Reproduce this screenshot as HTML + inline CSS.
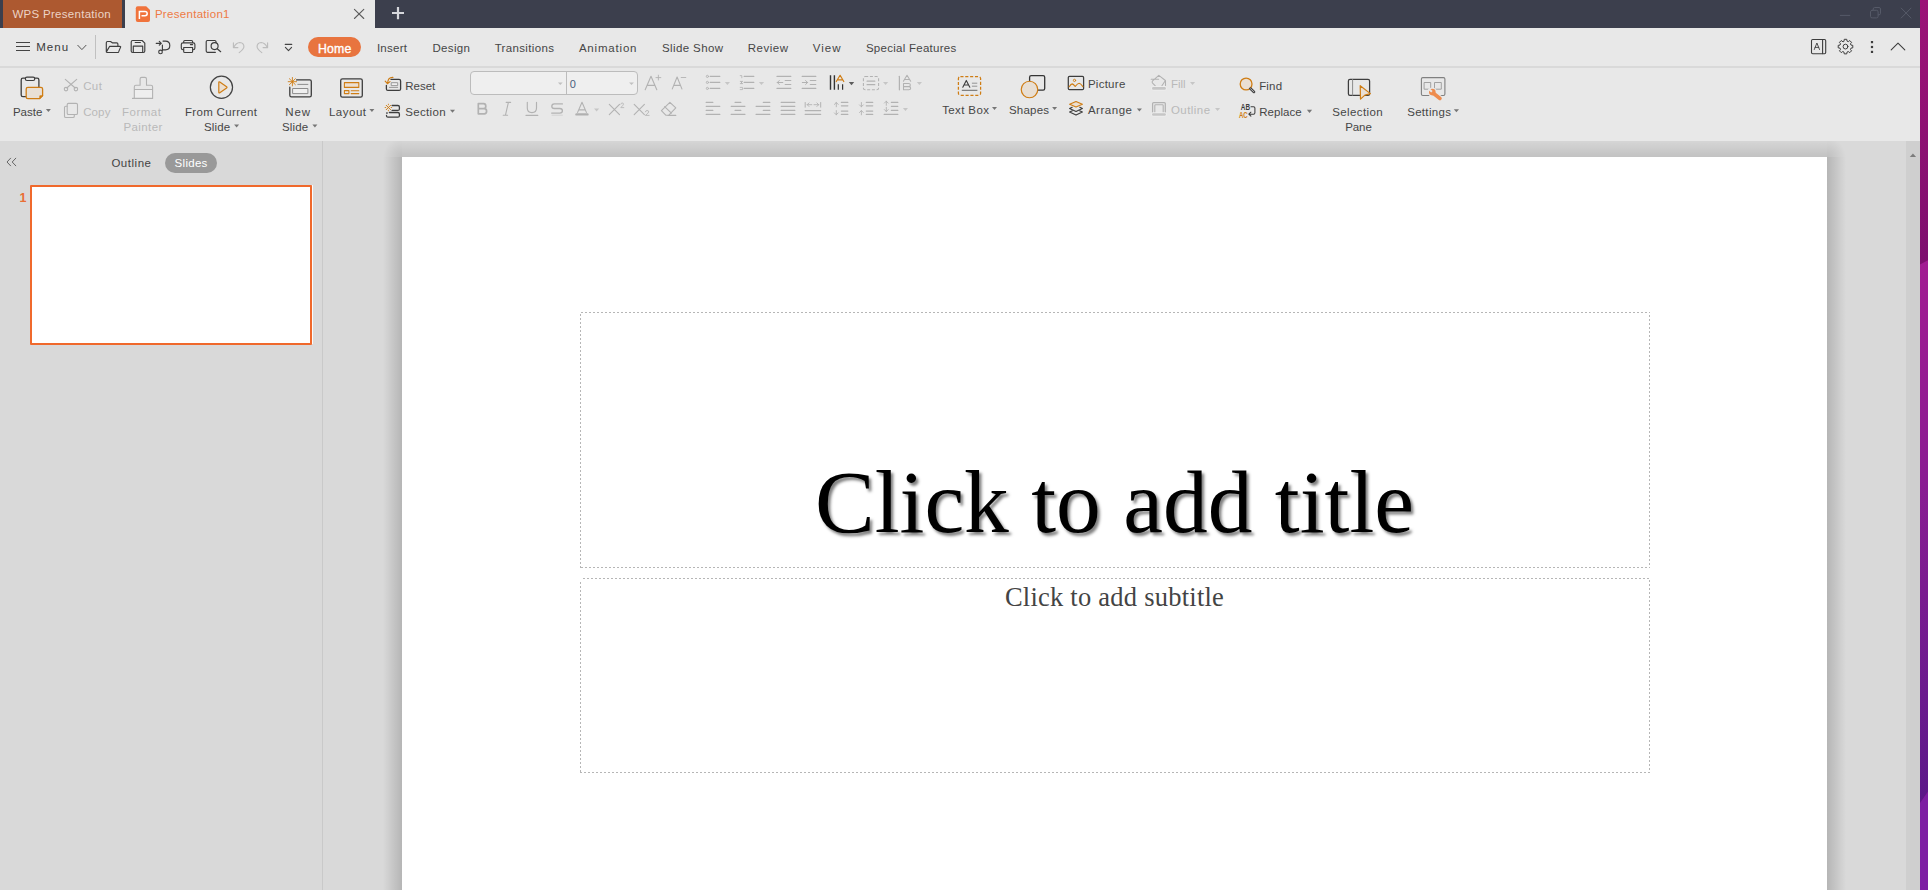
<!DOCTYPE html>
<html lang="en">
<head>
<meta charset="utf-8">
<title>Presentation1 - WPS Presentation</title>
<style>
html,body{margin:0;padding:0;}
body{width:1928px;height:890px;overflow:hidden;position:relative;background:#d9d9d9;font-family:"Liberation Sans",sans-serif;}
.abs{position:absolute;}
.t{position:absolute;white-space:nowrap;font-family:"Liberation Sans",sans-serif;font-size:12px;line-height:normal;}
#desk{left:1920px;top:0;width:8px;height:890px;background:linear-gradient(to bottom,#9b1377 0,#961175 70px,#7d0e6e 264px);}
#desk2{left:1920px;top:0;width:8px;height:890px;background:linear-gradient(to bottom,#a21c92 262px,#8a1c92 480px,#6a1a8e 700px,#5b1888 800px);clip-path:polygon(0 264.6px,8px 260.3px,8px 791.5px,0 802.9px);}
#desk3{left:1920px;top:0;width:8px;height:890px;background:#7d1fa3;clip-path:polygon(0 802.9px,8px 791.5px,8px 890px,0 890px);}
#titlebar{left:0;top:0;width:1920px;height:28px;background:#3c3f4d;}
#tab1{left:3px;top:0;width:119px;height:28px;background:#ad5930;}
#tab2{left:125px;top:0;width:250px;height:28px;background:#e8e8e8;}
#menurow{left:0;top:28px;width:1920px;height:38px;background:#e8e8e8;}
#divider{left:0;top:66px;width:1920px;height:2px;background:#d9d9d9;}
#ribbon{left:0;top:68px;width:1920px;height:73px;background:#e8e8e8;}
#work{left:0;top:141px;width:1920px;height:749px;background:#d9d9d9;}
#panelline{left:322px;top:141px;width:1px;height:749px;background:#c9c9c9;}
#vscroll{left:1906px;top:141px;width:14px;height:749px;background:#cfcfcf;}
#homepill{left:308px;top:37px;width:53.25px;height:20px;border-radius:10px;background:#e8743f;}
#slidespill{left:165px;top:153px;width:52px;height:20px;border-radius:10px;background:#999999;}
#thumb{left:30px;top:185px;width:278px;height:155.5px;border:2px solid #f0692c;background:#fff;border-radius:1px;}
#thumbw{left:312px;top:185px;width:1px;height:159px;background:#fbfbfb;}
#slide{left:402px;top:157px;width:1425px;height:740px;background:#fff;}
.sh{position:absolute;}
#shwrap{position:absolute;left:0;top:141px;width:1920px;height:749px;overflow:hidden;}
.ph{position:absolute;border:1px dashed #b4b4b4;box-sizing:border-box;}
#ph1{left:580px;top:312px;width:1070px;height:256px;}
#ph2{left:580px;top:578px;width:1070px;height:195px;}
#title{position:absolute;left:580px;width:1070px;text-align:center;font-family:"Liberation Serif",serif;color:#000;white-space:nowrap;text-shadow:2.5px 2.5px 3px rgba(0,0,0,0.5);}
#subtitle{position:absolute;left:580px;width:1070px;text-align:center;font-family:"Liberation Serif",serif;color:#444;white-space:nowrap;}
#combo{left:470px;top:71px;width:166px;height:22px;border:1px solid #bcbcbc;border-radius:4px;background:#efefef;box-sizing:content-box;}
#combosep{left:566px;top:71px;width:1px;height:24px;background:#bcbcbc;}
svg{position:absolute;left:0;top:0;overflow:visible;}
</style>
</head>
<body>
<div id="work" class="abs"></div>
<div id="vscroll" class="abs"></div>
<div id="panelline" class="abs"></div>
<div id="shwrap">
<div class="sh" style="left:383px;top:16px;width:19px;height:740px;background:linear-gradient(to right,rgba(0,0,0,0),rgba(0,0,0,0.165));"></div>
<div class="sh" style="left:1827px;top:16px;width:19px;height:740px;background:linear-gradient(to left,rgba(0,0,0,0),rgba(0,0,0,0.165));"></div>
<div class="sh" style="left:402px;top:-3px;width:1425px;height:19px;background:linear-gradient(to bottom,rgba(0,0,0,0),rgba(0,0,0,0.105));"></div>
<div class="sh" style="left:383px;top:-3px;width:19px;height:19px;background:radial-gradient(circle at 100% 100%,rgba(0,0,0,0.12),rgba(0,0,0,0) 19px);"></div>
<div class="sh" style="left:1827px;top:-3px;width:19px;height:19px;background:radial-gradient(circle at 0 100%,rgba(0,0,0,0.12),rgba(0,0,0,0) 19px);"></div>
</div>
<div id="slide" class="abs"></div>
<div id="title" style="top:450.4px;left:579.5px;font-size:89.5px;">Click to add title</div>
<div id="subtitle" style="top:581.7px;left:579.5px;font-size:26.5px;letter-spacing:0.24px;">Click to add subtitle</div>
<div id="thumbw" class="abs"></div>
<div id="thumb" class="abs"></div>
<div id="slidespill" class="abs"></div>
<div id="titlebar" class="abs"></div>
<div id="tab1" class="abs"></div>
<div id="tab2" class="abs"></div>
<div id="menurow" class="abs"></div>
<div id="ribbon" class="abs"></div>
<div id="divider" class="abs"></div>
<div id="homepill" class="abs"></div>
<div id="combo" class="abs"></div>
<div id="combosep" class="abs"></div>
<div id="desk" class="abs"></div><div id="desk2" class="abs"></div><div id="desk3" class="abs"></div>
<svg width="1928" height="890" viewBox="0 0 1928 890" fill="none" stroke-linecap="round" stroke-linejoin="round">
<g stroke="#b6b6b6" stroke-width="1" stroke-dasharray="2 2" stroke-linecap="butt" shape-rendering="crispEdges">
<path d="M581 312.5H1650"/><path d="M580.5 314V568"/><path d="M581 567.5H1650"/><path d="M1649.5 315V568"/>
<path d="M583 578.5H1650"/><path d="M580.5 582V773"/><path d="M580 772.5H1650"/><path d="M1649.5 580V773"/>
</g>
<path d="M137.7 6.3H146.2L150 10.1V20.1Q150 22 148.1 22H137.7Q135.8 22 135.8 20.1V8.2Q135.8 6.3 137.7 6.3Z" fill="#f0733c" stroke="none"/>
<path d="M139.4 19V11.4H145Q147.2 11.4 147.2 13.6Q147.2 15.8 145 15.8H141.5" stroke="#fff" stroke-width="1.5" fill="none" stroke-linejoin="miter" stroke-linecap="butt"/>
<path d="M354.4 9.4L363.8 18.5M363.8 9.4L354.4 18.5" stroke="#5a5a5a" stroke-width="1.05" fill="none" />
<path d="M392 13H404M398 7V19.2" stroke="#d6d7dc" stroke-width="2.2" stroke-linecap="butt"/>
<path d="M1840.3 15.4H1849.8" stroke="#565a68" stroke-width="1"/>
<path d="M1873.2 9.6V9Q1873.2 7.5 1874.7 7.5H1879Q1880.5 7.5 1880.5 9V13.3Q1880.5 14.8 1879 14.8H1878.3" stroke="#565a68" stroke-width="1" fill="none" />
<rect x="1870.5" y="10.3" width="7.6" height="7.6" rx="1.6" stroke="#565a68" stroke-width="1"/>
<path d="M1901.2 8.1L1911 18M1911 8.1L1901.2 18" stroke="#565a68" stroke-width="1" fill="none" />
<path d="M16 42.5H30M16 46.5H30M16 50.5H30" stroke="#444" stroke-width="1" stroke-linecap="butt" shape-rendering="crispEdges"/>
<path d="M77.8 45.3L81.9 49.6L86 45.3" stroke="#555" stroke-width="1" fill="none" />
<path d="M95.5 35V59" stroke="#c0c0c0" stroke-width="1" stroke-linecap="butt" shape-rendering="crispEdges"/>
<path d="M106.3 51.4V42.7Q106.3 41.5 107.5 41.5H110.5L112.3 42.8H116.7Q117.9 42.8 117.9 44V45.7 M109.7 46.3H120Q120.9 46.3 120.6 47.1L118.6 51.9Q118.3 52.5 117.6 52.5H107.1Q106.1 52.5 106.5 51.6Z" stroke="#3d3d3d" stroke-width="1.15" fill="none" />
<path d="M132.7 40.5H142.1L144.8 43.2V51Q144.8 52.5 143.3 52.5H132.7Q131.2 52.5 131.2 51V42Q131.2 40.5 132.7 40.5Z M135.2 42.5H140.4 M133.3 52.3V46.1H142.7V52.3" stroke="#3d3d3d" stroke-width="1.15" fill="none" />
<path d="M156.2 43.3H161.2M159.3 41.4L161.3 43.3L159.3 45.2 M162.4 45V50.4 M163 41.1H165.4Q169.8 41.1 169.8 45.45Q169.8 49.8 165.4 49.8H162.8" stroke="#3d3d3d" stroke-width="1.15" fill="none" />
<circle cx="160.5" cy="51.9" r="1.8" stroke="#3d3d3d" stroke-width="1.15"/>
<path d="M183.7 42.8V41.6Q183.7 40.5 184.8 40.5H191.5Q192.6 40.5 192.6 41.6V42.8 M183.6 49.7H183Q181.3 49.7 181.3 48V44.6Q181.3 42.9 183 42.9H193.2Q194.9 42.9 194.9 44.6V48Q194.9 49.7 193.2 49.7H192.8 M183.7 47.5H192.6V51.4Q192.6 52.5 191.5 52.5H184.8Q183.7 52.5 183.7 51.4Z M190.4 44.6H192.6" stroke="#3d3d3d" stroke-width="1.15" fill="none" />
<path d="M215.4 52.3H207.4Q206.2 52.3 206.2 51.1V41.7Q206.2 40.5 207.4 40.5H214.8Q215.9 40.5 216 41.6V42.4" stroke="#3d3d3d" stroke-width="1.15" fill="none" />
<circle cx="214.6" cy="46.1" r="3.5" stroke="#3d3d3d" stroke-width="1.15"/>
<path d="M217.2 48.7L220.7 51.7" stroke="#3d3d3d" stroke-width="1.15" fill="none" />
<path d="M233.4 42.9V47.6H237.9 M233.9 47.1Q236.2 42.7 239.8 42.5Q244.1 42.9 243.9 47Q243.6 49.2 239.2 52.6" stroke="#bcbcbc" stroke-width="1.15" fill="none" />
<path d="M267.6 42.9V47.6H263.1 M267.1 47.1Q264.8 42.7 261.2 42.5Q256.9 42.9 257.1 47Q257.4 49.2 261.8 52.6" stroke="#bcbcbc" stroke-width="1.15" fill="none" />
<path d="M285.3 44.4H291.7" stroke="#444" stroke-width="1.2"/>
<path d="M285.4 47.3L288.5 50.6L291.6 47.3" stroke="#444" stroke-width="1.1" fill="none" />
<rect x="1811.5" y="39.5" width="14.2" height="14.2" rx="1.2" stroke="#3d3d3d" stroke-width="1.1"/>
<path d="M1822.6 39.6V53.6" stroke="#3d3d3d" stroke-width="1.1"/>
<path d="M1814.3 49.5L1816.9 43L1819.5 49.5M1815.1 47.4H1818.7" stroke="#3d3d3d" stroke-width="0.9" fill="none" />
<path d="M1843.98 41.11L1844.25 39.31L1846.75 39.31L1847.02 41.11L1848.31 41.64L1849.77 40.56L1851.54 42.33L1850.46 43.79L1850.99 45.08L1852.79 45.35L1852.79 47.85L1850.99 48.12L1850.46 49.41L1851.54 50.87L1849.77 52.64L1848.31 51.56L1847.02 52.09L1846.75 53.89L1844.25 53.89L1843.98 52.09L1842.69 51.56L1841.23 52.64L1839.46 50.87L1840.54 49.41L1840.01 48.12L1838.21 47.85L1838.21 45.35L1840.01 45.08L1840.54 43.79L1839.46 42.33L1841.23 40.56L1842.69 41.64Z" stroke="#3d3d3d" stroke-width="1" fill="none" />
<circle cx="1845.5" cy="46.6" r="2.4" stroke="#3d3d3d" stroke-width="1"/>
<rect x="1870.9" y="41.0" width="2.2" height="2.2" fill="#3d3d3d" stroke="none"/>
<rect x="1870.9" y="45.9" width="2.2" height="2.2" fill="#3d3d3d" stroke="none"/>
<rect x="1870.9" y="50.8" width="2.2" height="2.2" fill="#3d3d3d" stroke="none"/>
<path d="M1891.2 49.8L1898 43.2L1904.8 49.8" stroke="#3d3d3d" stroke-width="1.1" fill="none" />
<path d="M26.4 96.6H22.9Q21.2 96.6 21.2 94.9V79.9Q21.2 78.2 22.9 78.2H25.4 M34.7 78.2H37.2Q38.9 78.2 38.9 79.9V87.2" stroke="#3d3d3d" stroke-width="1.3" fill="none" />
<rect x="25.4" y="77.1" width="9.3" height="3.4" rx="1.5" stroke="#3d3d3d" stroke-width="1.2" fill="#e8e8e8"/>
<path d="M27.9 87.4H40.9Q42.6 87.4 42.6 89.1V95.6L39.6 98.6H27.9Q26.2 98.6 26.2 96.9V89.1Q26.2 87.4 27.9 87.4Z" fill="#e9e0d5" stroke="#cf7d14" stroke-width="1.3"/>
<path d="M42.4 95.8H39.8V98.4Z" fill="#cf7d14" stroke="#cf7d14" stroke-width="0.8"/>
<path d="M45.9 109.1H50.9L48.4 112.1Z" fill="#767676" stroke="none"/>
<path d="M65.3 79.4L75.2 88 M76.7 79.4L66.8 88" stroke="#b2b2b2" stroke-width="1.1" fill="none" />
<circle cx="66" cy="89.1" r="1.75" stroke="#b2b2b2" stroke-width="1.1"/>
<circle cx="75.9" cy="89.1" r="1.75" stroke="#b2b2b2" stroke-width="1.1"/>
<rect x="67.2" y="103.4" width="10.3" height="11.1" rx="1.3" stroke="#b2b2b2" stroke-width="1.1"/>
<path d="M74.3 114.8V116.2Q74.3 117.5 73 117.5H65.8Q64.5 117.5 64.5 116.2V107.6Q64.5 106.3 65.8 106.3H67" stroke="#b2b2b2" stroke-width="1.1" fill="none" />
<rect x="134.4" y="89.5" width="18.2" height="8.8" fill="#eeeeee" stroke="none"/>
<path d="M140.1 85.3V79Q140.1 77.4 141.7 77.4H144.9Q146.5 77.4 146.5 79V85.3H151Q152.6 85.3 152.6 86.9V98.4H132.5 M134.3 98.4V86.9Q134.3 85.3 135.9 85.3H140.1 M134.3 89.5H152.6" stroke="#b2b2b2" stroke-width="1.1" fill="none" />
<circle cx="221.45" cy="87.3" r="11.1" stroke="#444" stroke-width="1.2"/>
<path d="M218.8 82.6Q218.8 81.4 219.8 82L226.6 86.7Q227.4 87.4 226.6 88L219.8 92.8Q218.8 93.4 218.8 92.2Z" stroke="#cf7d14" stroke-width="1.2" fill="#ecdfd0" stroke-linejoin="round"/>
<path d="M234.1 124.4H239.1L236.6 127.4Z" fill="#767676" stroke="none"/>
<path d="M296.6 79.9H309.7Q311.3 79.9 311.3 81.5V95.3Q311.3 96.9 309.7 96.9H291.4Q289.8 96.9 289.8 95.3V87.2" stroke="#3d3d3d" stroke-width="1.3" fill="none" />
<path d="M297.8 84.4H307.9" stroke="#8c8c8c" stroke-width="1"/>
<rect x="293" y="88.5" width="14.9" height="5.1" stroke="#8c8c8c" stroke-width="1" fill="#efefef"/>
<path d="M292.4 77.5V85.9M288.2 81.7H296.6M289.4 78.7L295.4 84.7M295.4 78.7L289.4 84.7" stroke="#cf7d14" stroke-width="0.9" fill="none" />
<path d="M312.4 124.4H317.4L314.9 127.4Z" fill="#767676" stroke="none"/>
<rect x="340.7" y="78.8" width="21.6" height="18.4" rx="1.8" stroke="#3d3d3d" stroke-width="1.3"/>
<rect x="344.4" y="82.6" width="14.4" height="4.8" stroke="#cf7d14" stroke-width="1.1" fill="#ecdfd0"/>
<rect x="344.4" y="90.6" width="4.5" height="3" stroke="#cf7d14" stroke-width="1.1"/>
<path d="M351.2 90.8H358.8" stroke="#cf7d14" stroke-width="1.1"/>
<path d="M351.2 93.6H358.8" stroke="#cf7d14" stroke-width="1.1"/>
<path d="M369.4 109.1H374.4L371.9 112.1Z" fill="#767676" stroke="none"/>
<path d="M391 79.4H399.1Q400.6 79.4 400.6 80.9V88.9Q400.6 90.4 399.1 90.4H387.9Q386.4 90.4 386.4 88.9V85.3" stroke="#3d3d3d" stroke-width="1.3" fill="none" />
<rect x="391.6" y="82.7" width="6.1" height="2.9" stroke="#909090" stroke-width="0.9" fill="#efefef"/>
<path d="M389.4 87.4H397.7" stroke="#909090" stroke-width="0.9"/>
<path d="M392.9 77.4Q388 77.2 387.5 83.3 M385.2 81.1L387.4 83.7L390 81.6" stroke="#cf7d14" stroke-width="1.15" fill="none" />
<path d="M392.1 105.5H397.9Q399.4 105.5 399.4 107V108.9Q399.4 110.4 397.9 110.4H392.1" stroke="#3d3d3d" stroke-width="1.3" fill="none" />
<path d="M389.4 112.5H397.9Q399.4 112.5 399.4 114V115.7Q399.4 117.2 397.9 117.2H388Q386.5 117.2 386.5 115.7V115.4" stroke="#3d3d3d" stroke-width="1.3" fill="none" />
<rect x="386.2" y="112.3" width="1.5" height="1.5" fill="#3d3d3d" stroke="none"/>
<path d="M386.2 105.3L390.6 109.7M390.6 105.3L386.2 109.7" stroke="#cf7d14" stroke-width="1" fill="none" />
<path d="M388.4 104.2V104.8M388.4 110.2V110.8M385.1 107.5H385.7M391.1 107.5H391.7" stroke="#cf7d14" stroke-width="0.9" fill="none" />
<path d="M450 109.7H455L452.5 112.7Z" fill="#767676" stroke="none"/>
<path d="M557.9 82.6H562.7L560.3 85.1Z" fill="#c0c0c0" stroke="none"/>
<path d="M629.1 82.6H633.9L631.5 85.1Z" fill="#c0c0c0" stroke="none"/>
<path d="M645.2 89.7L651 76.3L656.8 89.7M647 85.4H655" stroke="#b2b2b2" stroke-width="1.1" fill="none" />
<path d="M656 77.6H660.8M658.4 75.2V80" stroke="#b2b2b2" stroke-width="0.9" fill="none" />
<path d="M672.3 88.9L677.1 77L681.9 88.9M673.8 85.4H680.4" stroke="#b2b2b2" stroke-width="1.1" fill="none" />
<path d="M681.2 77.5H685.8" stroke="#b2b2b2" stroke-width="0.9" fill="none" />
<circle cx="707.4" cy="76.4" r="1.1" stroke="#b2b2b2" stroke-width="0.9"/>
<path d="M710.2 76.4H719.8" stroke="#b2b2b2" stroke-width="1.2"/>
<circle cx="707.4" cy="82.4" r="1.1" stroke="#b2b2b2" stroke-width="0.9"/>
<path d="M710.2 82.4H719.8" stroke="#b2b2b2" stroke-width="1.2"/>
<circle cx="707.4" cy="88.4" r="1.1" stroke="#b2b2b2" stroke-width="0.9"/>
<path d="M710.2 88.4H719.8" stroke="#b2b2b2" stroke-width="1.2"/>
<path d="M724.8 82H730L727.4 85.1Z" fill="#c6c6c6" stroke="none"/>
<path d="M744.2 76.4H753.8" stroke="#b2b2b2" stroke-width="1.2"/>
<path d="M744.2 82.4H753.8" stroke="#b2b2b2" stroke-width="1.2"/>
<path d="M744.2 88.4H753.8" stroke="#b2b2b2" stroke-width="1.2"/>
<path d="M740.2 75.6H741.8V77.8 M740.3 81.4H742.6M740.3 83.6H742.6M741 81.4L742 83.6M742 81.4L741 83.6 M740.2 87.4H742.6V89.6H740.2" stroke="#b2b2b2" stroke-width="0.8" fill="none" />
<path d="M758.9 82H764.1L761.5 85.1Z" fill="#c6c6c6" stroke="none"/>
<path d="M777 76.4H790.8" stroke="#b2b2b2" stroke-width="1.2"/>
<path d="M777 88.4H790.8" stroke="#b2b2b2" stroke-width="1.2"/>
<path d="M785.2 80.5H790.8" stroke="#b2b2b2" stroke-width="1.2"/>
<path d="M785.2 84.5H790.8" stroke="#b2b2b2" stroke-width="1.2"/>
<path d="M777.3 82.5H782.8M779.3 80.5L777.3 82.5L779.3 84.5" stroke="#b2b2b2" stroke-width="1" fill="none" />
<path d="M802.2 76.4H815.8" stroke="#b2b2b2" stroke-width="1.2"/>
<path d="M802.2 88.4H815.8" stroke="#b2b2b2" stroke-width="1.2"/>
<path d="M810.3 80.5H815.8" stroke="#b2b2b2" stroke-width="1.2"/>
<path d="M810.3 84.5H815.8" stroke="#b2b2b2" stroke-width="1.2"/>
<path d="M802.3 82.5H807.6M805.6 80.5L807.6 82.5L805.6 84.5" stroke="#b2b2b2" stroke-width="1" fill="none" />
<path d="M830.5 75.2V89.8M834.4 75.2V89.8" stroke="#333" stroke-width="1.4" stroke-linecap="butt"/>
<path d="M838.3 84.2V89.8M842.6 84.2V89.8" stroke="#333" stroke-width="1.2" stroke-linecap="butt"/>
<path d="M836.3 81.5L840.1 75.3L843.8 81.5M837.4 79.8H842.7" stroke="#cf7d14" stroke-width="1.2" fill="none" />
<path d="M848.8 82H854.2L851.5 85.2Z" fill="#5c5c5c" stroke="none"/>
<rect x="863.4" y="76.5" width="15.2" height="13.2" rx="1.8" stroke="#b2b2b2" stroke-width="1.05" stroke-dasharray="3 1.7" stroke-linecap="butt"/>
<path d="M867.1 81.2H874.8" stroke="#b2b2b2" stroke-width="1.2"/>
<path d="M867.1 84.7H874.8" stroke="#b2b2b2" stroke-width="1.2"/>
<path d="M883 82H888.2L885.6 85.1Z" fill="#c6c6c6" stroke="none"/>
<path d="M899.4 76.3V89.8" stroke="#b2b2b2" stroke-width="1.2"/>
<path d="M903.4 81.2L907 75.3L910.7 81.2M904.5 79.5H909.6" stroke="#b2b2b2" stroke-width="1.05" fill="none" />
<path d="M903.5 83.4H908.6Q910.4 83.4 910.4 85Q910.4 86.6 908.6 86.6H903.5ZM903.5 86.6H908.8Q910.7 86.6 910.7 88.2Q910.7 89.8 908.8 89.8H903.5Z" stroke="#b2b2b2" stroke-width="1.05" fill="none" />
<path d="M916.8 82H922L919.4 85.1Z" fill="#c6c6c6" stroke="none"/>
<path d="M478.3 103.7H483.6Q485.8 103.7 485.8 106.2Q485.8 108.6 483.6 108.6H478.3ZM478.3 108.6H484.2Q486.6 108.6 486.6 111.2Q486.6 113.8 484.2 113.8H478.3Z" stroke="#b2b2b2" stroke-width="1.7" fill="none" />
<path d="M508.4 102.4L505.4 115.3M506.2 102.4H510.6M503.2 115.3H507.6" stroke="#b2b2b2" stroke-width="1.1" fill="none" />
<path d="M527.3 102.3V108Q527.3 112.6 531.9 112.6Q536.5 112.6 536.5 108V102.3" stroke="#b2b2b2" stroke-width="1.15" fill="none" />
<path d="M526 115.4H537.8" stroke="#b2b2b2" stroke-width="1.1"/>
<path d="M562.4 103.9H554.4Q551.8 103.9 551.8 106.2Q551.8 108.5 554.4 108.5H559.8Q562.4 108.5 562.4 110.8Q562.4 113.1 559.8 113.1H551.7" stroke="#b2b2b2" stroke-width="1.3" fill="none" />
<path d="M552 115.2H562.4" stroke="#d2d2d2" stroke-width="1"/>
<path d="M577.6 112.4L582 102.3L586.4 112.4M578.8 109.9H585.2" stroke="#b2b2b2" stroke-width="1.1" fill="none" />
<rect x="575.3" y="113.2" width="13.3" height="2.4" rx="1.2" fill="#b0b0b0" stroke="none"/>
<path d="M594 108.4H599.2L596.6 111.5Z" fill="#c6c6c6" stroke="none"/>
<path d="M609.3 104.4L619.5 114.6M619.5 104.4L609.3 114.6" stroke="#b2b2b2" stroke-width="1.1" fill="none" />
<path d="M620.8 104.1Q621 103 622.2 103Q623.5 103 623.5 104.1Q623.5 104.9 620.8 107.6H623.8" stroke="#b2b2b2" stroke-width="0.8" fill="none" />
<path d="M634.2 104.4L644.4 114.6M644.4 104.4L634.2 114.6" stroke="#b2b2b2" stroke-width="1.1" fill="none" />
<path d="M645.4 111.8Q645.6 110.5 647.1 110.5Q648.7 110.5 648.7 111.9Q648.7 112.9 645.4 115.4H649.1" stroke="#b2b2b2" stroke-width="0.85" fill="none" />
<path d="M661.4 110.6L669.9 102.3L675.8 107.9L668.6 115.3H666Z M664.6 106.6L671.4 113.1 M668 115.4H675.8" stroke="#b2b2b2" stroke-width="1.1" fill="none" />
<path d="M706.2 102.4H712.8" stroke="#b2b2b2" stroke-width="1.25"/>
<path d="M735.1 102.4H740.8" stroke="#b2b2b2" stroke-width="1.25"/>
<path d="M763.3 102.4H769.8" stroke="#b2b2b2" stroke-width="1.25"/>
<path d="M781.2 102.4H794.8" stroke="#b2b2b2" stroke-width="1.25"/>
<path d="M706.2 106.3H719.8" stroke="#b2b2b2" stroke-width="1.25"/>
<path d="M731.2 106.3H744.9" stroke="#b2b2b2" stroke-width="1.25"/>
<path d="M756.1 106.3H769.8" stroke="#b2b2b2" stroke-width="1.25"/>
<path d="M781.2 106.3H794.8" stroke="#b2b2b2" stroke-width="1.25"/>
<path d="M706.2 110.4H712.8" stroke="#b2b2b2" stroke-width="1.25"/>
<path d="M735.1 110.4H740.8" stroke="#b2b2b2" stroke-width="1.25"/>
<path d="M763.3 110.4H769.8" stroke="#b2b2b2" stroke-width="1.25"/>
<path d="M781.2 110.4H794.8" stroke="#b2b2b2" stroke-width="1.25"/>
<path d="M706.2 114.4H719.8" stroke="#b2b2b2" stroke-width="1.25"/>
<path d="M731.2 114.4H744.9" stroke="#b2b2b2" stroke-width="1.25"/>
<path d="M756.1 114.4H769.8" stroke="#b2b2b2" stroke-width="1.25"/>
<path d="M781.2 114.4H794.8" stroke="#b2b2b2" stroke-width="1.25"/>
<path d="M805.2 110.6H820.6" stroke="#b2b2b2" stroke-width="1.25"/>
<path d="M805.2 114.4H820.6" stroke="#b2b2b2" stroke-width="1.25"/>
<path d="M805.2 102.5V107.2" stroke="#b2b2b2" stroke-width="1"/>
<path d="M820.7 102.5V107.2" stroke="#b2b2b2" stroke-width="1"/>
<path d="M807.2 104.7H811.8M809 102.9L807.2 104.7L809 106.5 M814 104.7H818.7M816.9 102.9L818.7 104.7L816.9 106.5" stroke="#b2b2b2" stroke-width="0.9" fill="none" />
<path d="M841.4 102.4H847.8" stroke="#b2b2b2" stroke-width="1.25"/>
<path d="M866.3 102.4H872.7" stroke="#b2b2b2" stroke-width="1.25"/>
<path d="M841.4 105.8H847.8" stroke="#b2b2b2" stroke-width="1.25"/>
<path d="M866.3 105.8H872.7" stroke="#b2b2b2" stroke-width="1.25"/>
<path d="M841.4 111.1H847.8" stroke="#b2b2b2" stroke-width="1.25"/>
<path d="M866.3 111.1H872.7" stroke="#b2b2b2" stroke-width="1.25"/>
<path d="M841.4 114.4H847.8" stroke="#b2b2b2" stroke-width="1.25"/>
<path d="M866.3 114.4H872.7" stroke="#b2b2b2" stroke-width="1.25"/>
<path d="M836.3 102.5V106.8M834.4 104.4L836.3 102.5L838.1999999999999 104.4" stroke="#b2b2b2" stroke-width="0.9" fill="none" />
<path d="M836.3 110.6V114.8M834.4 112.89999999999999L836.3 114.8L838.1999999999999 112.89999999999999" stroke="#b2b2b2" stroke-width="0.9" fill="none" />
<path d="M861.4 102.5V106.8M859.5 104.89999999999999L861.4 106.8L863.3 104.89999999999999" stroke="#b2b2b2" stroke-width="0.9" fill="none" />
<path d="M861.4 110.6V114.8M859.5 112.5L861.4 110.6L863.3 112.5" stroke="#b2b2b2" stroke-width="0.9" fill="none" />
<path d="M891.4 102.4H897.8" stroke="#b2b2b2" stroke-width="1.25"/>
<path d="M891.4 106.3H897.8" stroke="#b2b2b2" stroke-width="1.25"/>
<path d="M891.4 110.4H897.8" stroke="#b2b2b2" stroke-width="1.25"/>
<path d="M884.2 114.4H897.8" stroke="#b2b2b2" stroke-width="1.25"/>
<path d="M886.3 101.2V105.3M884.4 103.10000000000001L886.3 101.2L888.1999999999999 103.10000000000001" stroke="#b2b2b2" stroke-width="0.9" fill="none" />
<path d="M886.3 107.3V111.5M884.4 109.6L886.3 111.5L888.1999999999999 109.6" stroke="#b2b2b2" stroke-width="0.9" fill="none" />
<path d="M902.9 108H908L905.45 111Z" fill="#c6c6c6" stroke="none"/>
<rect x="958.4" y="76.6" width="22.2" height="18.7" rx="2" stroke="#cf7d14" stroke-width="1.25" stroke-dasharray="3.1 1.75" stroke-linecap="butt"/>
<path d="M962.8 87.2L966.3 80.4L969.8 87.2M964 85H968.6" stroke="#3d3d3d" stroke-width="1.1" fill="none" />
<path d="M972.3 83.2H976.9" stroke="#8a8a8a" stroke-width="0.9"/>
<path d="M972.3 86.2H976.9" stroke="#8a8a8a" stroke-width="0.9"/>
<path d="M962.2 90.3H977" stroke="#666" stroke-width="1"/>
<path d="M992 106.9H997L994.5 109.9Z" fill="#767676" stroke="none"/>
<rect x="1029.6" y="75.7" width="15.1" height="14.4" rx="1.6" stroke="#353535" stroke-width="1.3"/>
<circle cx="1029.5" cy="89.5" r="8.25" stroke="#cf7d14" stroke-width="1.2" fill="#e8dfd4"/>
<path d="M1052.1 106.9H1057.1L1054.6 109.9Z" fill="#767676" stroke="none"/>
<rect x="1068.3" y="76.4" width="15.3" height="13.2" rx="1.2" stroke="#3d3d3d" stroke-width="1.25"/>
<circle cx="1074.5" cy="80.4" r="1.15" stroke="#cf7d14" stroke-width="0.95"/>
<path d="M1069.2 86.7Q1071 84 1072.2 83.9Q1073.4 84 1075.2 86.5Q1077.6 83.4 1079.1 83.3Q1080.6 83.5 1082.9 86.6" stroke="#cf7d14" stroke-width="1.15" fill="none" />
<path d="M1076 101.6L1082.4 104.3L1076 107L1069.6 104.3Z" stroke="#cf7d14" stroke-width="1.1" fill="#ecdfd0" />
<path d="M1072.2 107.2L1069.6 108.5L1076 111.4L1082.4 108.5L1079.8 107.2" stroke="#3d3d3d" stroke-width="1.1" fill="none" />
<path d="M1072.4 110.8L1069.6 112.1L1076 115.1L1082.4 112.1L1079.6 110.8" stroke="#3d3d3d" stroke-width="1.1" fill="none" />
<path d="M1136.9 108.6H1141.9L1139.4 111.6Z" fill="#767676" stroke="none"/>
<path d="M1155.3 85.8L1152.6 83.2Q1151.6 82 1152.6 80.9L1158.8 75.3L1165.4 80.5L1161.9 85.8 M1151.2 79.3H1158.6 M1165.5 80.5V85.4" stroke="#b2b2b2" stroke-width="1.05" fill="none" />
<rect x="1151.2" y="86.3" width="15.5" height="4.3" rx="2.1" fill="#efefef" stroke="none"/>
<rect x="1152" y="87.1" width="13.9" height="2.7" rx="1.3" fill="#c6c6c6" stroke="none"/>
<path d="M1190 81.9H1195.1L1192.55 84.9Z" fill="#c6c6c6" stroke="none"/>
<path d="M1152.6 111.9V103.6Q1152.6 102.6 1153.6 102.6H1164.3Q1165.3 102.6 1165.3 103.6V111.9" stroke="#b2b2b2" stroke-width="1.25" fill="none" />
<path d="M1154.8 111.9V105.6Q1154.8 104.8 1155.6 104.8H1162.4Q1163.2 104.8 1163.2 105.6V111.9" stroke="#b2b2b2" stroke-width="1.1" fill="none" />
<rect x="1151.2" y="112.5" width="15.5" height="4.1" rx="2" fill="#efefef" stroke="none"/>
<rect x="1152" y="113.3" width="13.9" height="2.5" rx="1.2" fill="#c6c6c6" stroke="none"/>
<path d="M1215 108.1H1220.1L1217.55 111.1Z" fill="#c6c6c6" stroke="none"/>
<circle cx="1246.1" cy="84" r="5.9" stroke="#cf7d14" stroke-width="1.3" fill="#ebdfd2"/>
<path d="M1250.4 88.6L1254 91.9" stroke="#444" stroke-width="2.7" stroke-linecap="round"/>
<path d="M1250.6 88.8L1253.8 91.7" stroke="#cfcfcf" stroke-width="0.8" stroke-linecap="round"/>
<text x="1240.8" y="109.7" font-family="Liberation Sans, sans-serif" font-size="8.8" font-weight="700" fill="#3d3d3d" stroke="none" textLength="9.2" lengthAdjust="spacingAndGlyphs">AB</text>
<text x="1238.9" y="117.9" font-family="Liberation Sans, sans-serif" font-size="8.8" font-weight="700" fill="#cf7d14" stroke="none" textLength="8.8" lengthAdjust="spacingAndGlyphs">AC</text>
<path d="M1251 106.7H1253.5Q1254.9 106.7 1254.9 108.1V112.8Q1254.9 114.2 1253.5 114.2H1249 M1250.9 112.2L1248.8 114.2L1250.9 116.2" stroke="#3d3d3d" stroke-width="1.05" fill="none" />
<path d="M1306.9 109.8H1312.1L1309.5 112.9Z" fill="#767676" stroke="none"/>
<rect x="1348.4" y="79.4" width="21.2" height="16" rx="1.6" stroke="#3d3d3d" stroke-width="1.25"/>
<path d="M1352.6 79.6V95.2" stroke="#8c8c8c" stroke-width="1"/>
<path d="M1360.2 85.7L1370.4 93.6L1364.9 95.1L1360.5 99.1Z" fill="#e9dfd4" stroke="#cf7d14" stroke-width="1.2" stroke-linejoin="round"/>
<rect x="1421.4" y="77.6" width="23.5" height="17.9" rx="1.4" stroke="#808080" stroke-width="1.1"/>
<rect x="1424.5" y="82.5" width="6.2" height="6.7" stroke="#9a9a9a" stroke-width="0.9"/>
<rect x="1434.9" y="82.5" width="6.4" height="6.7" stroke="#9a9a9a" stroke-width="0.9"/>
<path d="M1433 93L1440 98.5" stroke="#e8e8e8" stroke-width="6" stroke-linecap="round"/>
<circle cx="1432.3" cy="92.1" r="4.6" fill="#e8e8e8" stroke="none"/>
<path d="M1433 93L1440 98.5" stroke="#ee8c4e" stroke-width="3.6" stroke-linecap="round"/>
<circle cx="1432.3" cy="92.1" r="3.3" fill="#ee8c4e" stroke="none"/>
<path d="M1431.9 91.7L1428.6 88.9" stroke="#e8e8e8" stroke-width="2.1" stroke-linecap="butt"/>
<path d="M1453.8 109.2H1459L1456.4 112.3Z" fill="#767676" stroke="none"/>
<path d="M10.6 158.2L7 162L10.6 165.8M15.8 158.2L12.2 162L15.8 165.8" stroke="#666" stroke-width="1" fill="none" />
<path d="M1909.8 157.1H1916.1L1912.95 153.5Z" fill="#7c7c7c" stroke="none"/>
</svg>
<span class="t" style="left:12.40px;top:8.00px;font-size:11.5px;color:#ecd3c5;letter-spacing:0.293px;">WPS Presentation</span>
<span class="t" style="left:154.90px;top:8.00px;font-size:11.5px;color:#ee7a45;letter-spacing:0.302px;">Presentation1</span>
<span class="t" style="left:36.15px;top:41.00px;font-size:11.5px;color:#3a3a3a;letter-spacing:1.067px;">Menu</span>
<span class="t" style="left:318.00px;top:42.00px;font-size:12.3px;color:#fff;letter-spacing:0.172px;-webkit-text-stroke:0.35px #fff;">Home</span>
<span class="t" style="left:376.90px;top:42.00px;font-size:11.5px;color:#464646;letter-spacing:0.272px;">Insert</span>
<span class="t" style="left:432.40px;top:42.00px;font-size:11.5px;color:#464646;letter-spacing:0.348px;">Design</span>
<span class="t" style="left:494.65px;top:42.00px;font-size:11.5px;color:#464646;letter-spacing:0.347px;">Transitions</span>
<span class="t" style="left:578.90px;top:42.00px;font-size:11.5px;color:#464646;letter-spacing:0.807px;">Animation</span>
<span class="t" style="left:661.90px;top:42.00px;font-size:11.5px;color:#464646;letter-spacing:0.410px;">Slide Show</span>
<span class="t" style="left:747.65px;top:42.00px;font-size:11.5px;color:#464646;letter-spacing:0.530px;">Review</span>
<span class="t" style="left:812.65px;top:42.00px;font-size:11.5px;color:#464646;letter-spacing:1.045px;">View</span>
<span class="t" style="left:865.90px;top:42.00px;font-size:11.5px;color:#464646;letter-spacing:0.272px;">Special Features</span>
<span class="t" style="left:12.90px;top:105.50px;font-size:11.5px;color:#464646;letter-spacing:-0.004px;">Paste</span>
<span class="t" style="left:83.15px;top:80.00px;font-size:11.5px;color:#b9b9b9;letter-spacing:0.415px;">Cut</span>
<span class="t" style="left:83.15px;top:105.50px;font-size:11.5px;color:#b9b9b9;letter-spacing:0.135px;">Copy</span>
<span class="t" style="left:121.90px;top:105.50px;font-size:11.5px;color:#b9b9b9;letter-spacing:0.538px;">Format</span>
<span class="t" style="left:123.40px;top:120.50px;font-size:11.5px;color:#b9b9b9;letter-spacing:0.423px;">Painter</span>
<span class="t" style="left:184.90px;top:105.50px;font-size:11.5px;color:#464646;letter-spacing:0.335px;">From Current</span>
<span class="t" style="left:203.90px;top:120.50px;font-size:11.5px;color:#464646;letter-spacing:0.164px;">Slide</span>
<span class="t" style="left:285.15px;top:105.50px;font-size:11.5px;color:#464646;letter-spacing:0.961px;">New</span>
<span class="t" style="left:281.90px;top:120.50px;font-size:11.5px;color:#464646;letter-spacing:0.164px;">Slide</span>
<span class="t" style="left:328.90px;top:105.50px;font-size:11.5px;color:#464646;letter-spacing:0.520px;">Layout</span>
<span class="t" style="left:405.15px;top:80.00px;font-size:11.5px;color:#464646;letter-spacing:0.021px;">Reset</span>
<span class="t" style="left:405.15px;top:105.50px;font-size:11.5px;color:#464646;letter-spacing:0.363px;">Section</span>
<span class="t" style="left:569.65px;top:78.00px;font-size:11px;color:#4a607c;letter-spacing:1.025px;">0</span>
<span class="t" style="left:942.15px;top:104.25px;font-size:11.5px;color:#464646;letter-spacing:0.380px;">Text Box</span>
<span class="t" style="left:1008.90px;top:104.25px;font-size:11.5px;color:#464646;letter-spacing:0.231px;">Shapes</span>
<span class="t" style="left:1087.90px;top:77.75px;font-size:11.5px;color:#464646;letter-spacing:0.265px;">Picture</span>
<span class="t" style="left:1087.90px;top:103.75px;font-size:11.5px;color:#464646;letter-spacing:0.533px;">Arrange</span>
<span class="t" style="left:1170.90px;top:77.75px;font-size:11.5px;color:#b9b9b9;letter-spacing:-0.013px;">Fill</span>
<span class="t" style="left:1170.90px;top:103.75px;font-size:11.5px;color:#b9b9b9;letter-spacing:0.459px;">Outline</span>
<span class="t" style="left:1259.15px;top:80.00px;font-size:11.5px;color:#464646;letter-spacing:0.194px;">Find</span>
<span class="t" style="left:1259.15px;top:105.50px;font-size:11.5px;color:#464646;letter-spacing:0.064px;">Replace</span>
<span class="t" style="left:1332.15px;top:105.50px;font-size:11.5px;color:#464646;letter-spacing:0.399px;">Selection</span>
<span class="t" style="left:1345.15px;top:120.50px;font-size:11.5px;color:#464646;letter-spacing:-0.052px;">Pane</span>
<span class="t" style="left:1407.15px;top:105.50px;font-size:11.5px;color:#464646;letter-spacing:0.323px;">Settings</span>
<span class="t" style="left:111.40px;top:157.30px;font-size:11.5px;color:#444;letter-spacing:0.523px;">Outline</span>
<span class="t" style="left:174.60px;top:157.30px;font-size:11.5px;color:#fff;letter-spacing:0.279px;">Slides</span>
<span class="t" style="left:19.40px;top:191.00px;font-size:12.5px;color:#e96e35;letter-spacing:0.547px;font-weight:700;">1</span>
</body>
</html>
